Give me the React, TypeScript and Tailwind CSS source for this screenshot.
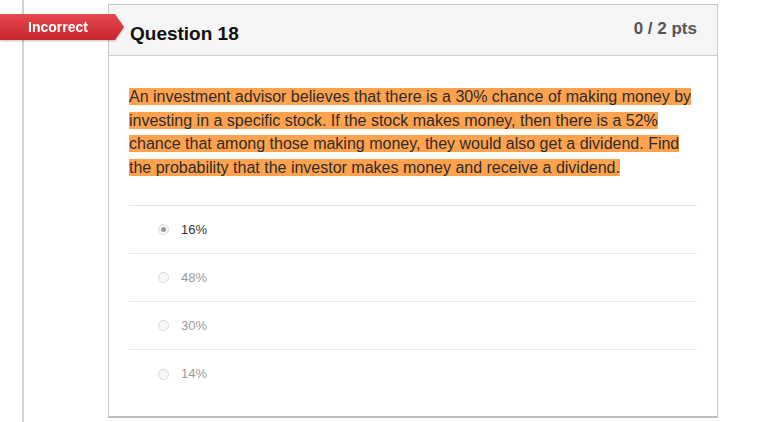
import React from 'react';

const answers = [
  { label: '16%', selected: true },
  { label: '48%', selected: false },
  { label: '30%', selected: false },
  { label: '14%', selected: false },
];

export default function App() {
  return (
    <div
      className="relative w-[770px] h-[422px] overflow-hidden bg-white flex"
      style={{ fontFamily: '"Liberation Sans", Arial, sans-serif' }}
    >
      {/* left rail */}
      <div className="w-[24px] h-full shrink-0 border-r-2 border-[#d4d4d4]" />

      {/* Incorrect banner */}
      <div className="absolute left-0 top-[14px] h-[26px] flex items-stretch drop-shadow-[0_1px_1px_rgba(0,0,0,0.25)] z-10">
        <div className="w-[115px] bg-gradient-to-b from-[#e5484d] to-[#c8262c] flex items-center pl-[28px] text-white font-bold text-[14px]">
          Incorrect
        </div>
        <svg width="9" height="26" viewBox="0 0 9 26" className="block">
          <defs>
            <linearGradient id="bg" x1="0" y1="0" x2="0" y2="1">
              <stop offset="0" stopColor="#e5484d" />
              <stop offset="1" stopColor="#c8262c" />
            </linearGradient>
          </defs>
          <polygon points="0,0 9,13 0,26" fill="url(#bg)" />
        </svg>
      </div>

      {/* question card */}
      <div className="ml-[84px] mt-[4px] w-[610px] h-[414px] shrink-0 border border-[#c8c8c8] border-b-2 border-b-[#bdbdbd] flex flex-col">
        <div className="h-[51px] shrink-0 bg-[#f5f5f5] border-b border-[#cccccc] flex justify-between pl-[21px] pr-[20px]">
          <div className="pt-[17px] text-[19px] leading-[24px] font-bold text-[#111]">Question 18</div>
          <div className="pt-[13px] text-[17px] leading-[22px] font-bold text-[#555]">0 / 2 pts</div>
        </div>

        <div className="px-[20px] pt-[29px]">
          <p className="text-[16px] leading-[23.5px] text-[#2d2d2d] w-[568px]">
            <span className="bg-[#ffa24d]">
              An investment advisor believes that there is a 30% chance of making money by investing in a specific stock. If the stock makes money, then there is a 52% chance that among those making money, they would also get a dividend. Find the probability that the investor makes money and receive a dividend.
            </span>
          </p>

          <div className="mt-[26px] border-t border-[#e3e3e3]">
            {answers.map((a, i) => (
              <div
                key={a.label}
                className={`h-[48px] flex items-center pl-[29px] ${i < answers.length - 1 ? 'border-b border-[#e8e8e8]' : ''}`}
              >
                <span className="w-[11px] h-[11px] rounded-full border border-[#d9d9d9] bg-[#f7f7f7] flex items-center justify-center">
                  {a.selected && <span className="w-[5px] h-[5px] rounded-full bg-[#9a9a9a]" />}
                </span>
                <span className={`ml-[12px] text-[13px] ${a.selected ? 'text-[#333]' : 'text-[#9a9a9a]'}`}>{a.label}</span>
              </div>
            ))}
          </div>
        </div>
      </div>
    </div>
  );
}
